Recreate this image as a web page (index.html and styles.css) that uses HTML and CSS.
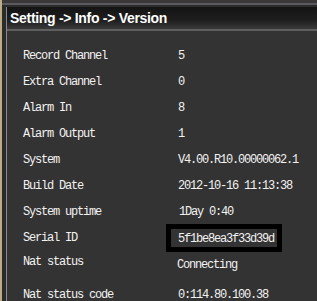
FILE: index.html
```html
<!DOCTYPE html>
<html lang="en">
<head>
  <meta charset="UTF-8">
  <meta name="viewport" content="width=device-width, initial-scale=1.0">
  <title>Version</title>
  <link rel="stylesheet" href="styles.css">
</head>
<body>
  <div class="screen">
    <div class="topband"></div>
    <div class="window">
      <div class="titlebar">Setting -&gt; Info -&gt; Version</div>

      <div class="list">
        <div class="row">
          <span class="label">Record Channel</span>
          <span class="value">5</span>
        </div>
        <div class="row">
          <span class="label">Extra Channel</span>
          <span class="value">0</span>
        </div>
        <div class="row">
          <span class="label">Alarm In</span>
          <span class="value">8</span>
        </div>
        <div class="row">
          <span class="label">Alarm Output</span>
          <span class="value">1</span>
        </div>
        <div class="row">
          <span class="label">System</span>
          <span class="value">V4.00.R10.00000062.1</span>
        </div>
        <div class="row">
          <span class="label">Build Date</span>
          <span class="value">2012-10-16 11:13:38</span>
        </div>
        <div class="row">
          <span class="label">System uptime</span>
          <span class="value value-uptime">1Day 0:40</span>
        </div>
        <div class="row row-serial">
          <span class="label">Serial ID</span>
          <span class="value serial-box">5f1be8ea3f33d39d</span>
        </div>
        <div class="row row-nat">
          <span class="label">Nat status</span>
          <span class="value value-nat">Connecting</span>
        </div>
        <div class="row row-code">
          <span class="label">Nat status code</span>
          <span class="value">0:114.80.100.38</span>
        </div>
      </div>
    </div>
  </div>
</body>
</html>
```

FILE: styles.css
```css
html, body {
  margin: 0;
  padding: 0;
}
body {
  width: 317px;
  height: 301px;
  overflow: hidden;
  background-color: #333333;
  color: #f2f2f2;
}
.screen {
  height: 301px;
  border-left: 2px solid #bcae82;
  background-color: #2b2b2b;
}
.topband {
  height: 3px;
  background-color: #3a3839;
  border-bottom: 2px solid #5c5a5e;
  margin-bottom: 2px;
}
.window {
  margin-left: 4px;
  border-left: 1px solid #8a8a8a;
  height: 294px;
  background-color: #333333;
}
.titlebar {
  height: 21px;
  padding: 1px 0 0 3px;
  line-height: 21px;
  background: linear-gradient(#141414, #1e1e1e 60%, #3a3a3a);
  border-bottom: 2px solid #5f5f5f;
  font-family: "Liberation Sans", Arial, sans-serif;
  font-weight: bold;
  font-size: 14px;
  letter-spacing: -0.3px;
  color: #ffffff;
}
.list {
  display: flex;
  flex-direction: column;
  gap: 12px;
  padding: 18px 0 0 16px;
  font-family: "Liberation Mono", "Courier New", monospace;
  font-size: 12px;
  letter-spacing: -1.2px;
  line-height: 14px;
}
.row {
  display: flex;
  align-items: flex-start;
}
.label {
  width: 143px;
  flex-shrink: 0;
}
.value {
  padding-left: 12px;
}
.value-uptime {
  padding-left: 13px;
}
.row-serial {
  margin-top: -7px;
  align-items: center;
}
.serial-box {
  border: 5px solid #000000;
  padding: 3px 3px 1px 7px;
}
.row-nat {
  margin-top: -9px;
}
.value-nat {
  padding-left: 11px;
  margin-top: 3px;
}
.row-code {
  margin-top: 4px;
}
```
